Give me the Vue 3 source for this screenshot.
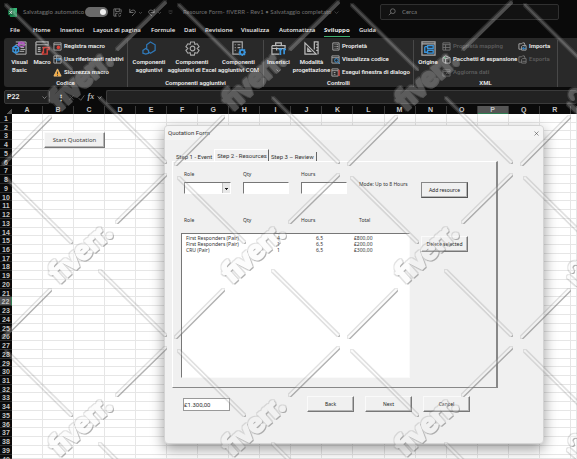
<script setup>
import { ref } from 'vue'

const autosave = ref(true)
const activeTab = ref('Sviluppo')
const tabs = ['File', 'Home', 'Inserisci', 'Layout di pagina', 'Formule', 'Dati', 'Revisione', 'Visualizza', 'Automatizza', 'Sviluppo', 'Guida']
const columns = 'ABCDEFGHIJKLMNOPQRS'.split('')
const rows = Array.from({ length: 40 }, (_, i) => i + 1)
const steps = ['Step 1 - Event', 'Step 2 - Resources', 'Step 3 – Review']
const activeStep = ref(1)
const resources = [
  { role: 'First Responders (Pair)', qty: 4, hours: '6,5', total: '£800,00' },
  { role: 'First Responders (Pair)', qty: 1, hours: '6,5', total: '£200,00' },
  { role: 'CRU (Pair)', qty: 1, hours: '6,5', total: '£300,00' }
]
const total = ref('£1.300,00')
const tile = 173
const marks = []
for (let r = 0; r < 3; r++) {
  for (let c = 0; c < 4; c++) marks.push({ x: c * tile, y: r * tile, text: c < 3 })
}
</script>

<template>
  <div class="app">
    <header class="titlebar">
      <svg class="logo" viewBox="0 0 10 10"><rect x="2" y="0" width="8" height="10" rx="1" fill="#1c8a52" /><rect x="6" y="0" width="4" height="5" fill="#35b777" /><rect x="0" y="2" width="6" height="6" rx="1" fill="#0f6b3c" /><path d="M1.700 3.500l2.600 3M4.300 3.500l-2.600 3" stroke="#fff" stroke-width="1" /></svg>
      <label class="autosave"><span>Salvataggio automatico</span><input v-model="autosave" type="checkbox" class="toggle" /></label>
      <div class="quick">
        <button aria-label="Salva"><svg viewBox="0 0 10 10"><path d="M1 1h7l1 1v3M1 1v8h3M3 1v3h4V1M3 9V6h2" /><path d="M6 7a2 2 0 0 1 3-.5M9 8a2 2 0 0 1-3 .7" /></svg></button>
        <button aria-label="Annulla"><svg viewBox="0 0 10 10"><path d="M2 1v4h4M2 5c2-4 7-3 6 0-.5 1.500-2 2-3.500 4" /></svg></button>
        <button class="tiny" aria-label="Elenco annulla"><svg viewBox="0 0 10 10"><path d="M2 4l3 3 3-3" /></svg></button>
        <button aria-label="Ripeti"><svg viewBox="0 0 10 10"><path d="M8 1v4H4M8 5C6 1 1 2 2 5c.5 1.500 2 2 3.500 4" /></svg></button>
        <button class="tiny" aria-label="Elenco ripeti"><svg viewBox="0 0 10 10"><path d="M2 4l3 3 3-3" /></svg></button>
        <button class="tiny" aria-label="Personalizza"><svg viewBox="0 0 10 10"><path d="M1 2h8M2 5l3 3 3-3" /></svg></button>
      </div>
      <div class="doc"><span>Resource Form- fIVERR - Rev1 • Salvataggio completato</span><svg viewBox="0 0 10 10"><path d="M1 3l4 4 4-4" /></svg></div>
      <label class="search"><svg viewBox="0 0 10 10"><circle cx="6" cy="4" r="3" /><path d="M4 6L1 9" /></svg><input type="text" placeholder="Cerca" aria-label="Cerca" /></label>
    </header>

    <nav class="tabs">
      <button v-for="t in tabs" :key="t" :class="{ on: t === activeTab }" @click="activeTab = t">{{ t }}</button>
    </nav>

    <section class="ribbon">
      <div class="group code">
        <div class="tools">
          <button class="big"><svg viewBox="0 0 16 16"><path d="M4 1h11v13H4M4 4h11M9 7h4M9 9h5M8 11h5" stroke="#bbb" /><path d="M1 7l3-2 3 2v4l-3 2-3-2zM1 7l3 2 3-2M4 9v4" stroke="#3b95dc" stroke-width="1.500" /><path d="M7 2l3-1 3 1v3l-3 1-3-1zM7 2l3 1 3-1" stroke="#b35cc4" stroke-width="1.300" /></svg><span>Visual<br />Basic</span></button>
          <button class="big"><svg viewBox="0 0 16 16"><path d="M1 1h13v4M1 1v13h7M1 4h13M3 7h3M8 7h3M3 9h3M3 11h3" stroke="#aaa" stroke-width="1.300" /><path d="M9 7h6v2h-2v5H8v-2h1z" stroke="#d8443c" stroke-width="1.500" /></svg><span>Macro</span></button>
          <div class="stack">
            <button><svg viewBox="0 0 10 10"><path d="M1 1h8v8H1zM1 3h8" stroke="#aaa" /><circle cx="6" cy="6" r="2" fill="#d8443c" /></svg>Registra macro</button>
            <button><svg viewBox="0 0 10 10"><path d="M1 1h8v8H1zM1 4h8M4 1v8" stroke="#aaa" /><path d="M3 5l2-2v4zM9 5L6 3v4z" fill="#3b95dc" /></svg>Usa riferimenti relativi</button>
            <button><svg viewBox="0 0 10 10"><path d="M5 1l4 8H1z" fill="#f2a73b" stroke="#f2c27a" /><path d="M5 4v3M5 8v1" stroke="#333" /></svg>Sicurezza macro</button>
          </div>
        </div>
        <p>Codice</p>
      </div>
      <div class="group addins">
        <div class="tools">
          <button class="big"><svg viewBox="0 0 16 16"><path d="M9 1l5 3v6l-5 3-4-3V4z" stroke="#2f78b8" stroke-width="1.300" /><path d="M4 8l3 2v3l-3 1-3-1v-3z" fill="#2a2a2a" stroke="#2f78b8" stroke-width="1.300" /></svg><span>Componenti<br />aggiuntivi</span></button>
          <button class="big"><svg viewBox="0 0 16 16"><path d="M6 1h4l.5 2.500L13 3l2 3-2 2 2 2-2 3-2.500-.5L10 15H6l-.5-2.500L3 13l-2-3 2-2-2-2 2-3 2.500.5z" stroke="#aaa" stroke-width="1.200" /><circle cx="8" cy="8" r="2.500" stroke="#aaa" stroke-width="1.200" /></svg><span>Componenti<br />aggiuntivi di Excel</span></button>
          <button class="big"><svg viewBox="0 0 16 16"><path d="M9 14H2V1h10v7M4 4h1M4 7h1M4 10h1M7 4h3M7 7h3" stroke="#aaa" stroke-width="1.300" /><circle cx="12" cy="12" r="2.500" stroke="#3b95dc" stroke-width="2" /><path d="M12 8v2M12 14v2M8 12h2M14 12h2M9 9l1 1M14 14l1 1M15 9l-1 1M9 15l1-1" stroke="#3b95dc" stroke-width="1.300" /></svg><span>Componenti<br />aggiuntivi COM</span></button>
        </div>
        <p>Componenti aggiuntivi</p>
      </div>
      <div class="group controls">
        <div class="tools">
          <button class="big"><svg viewBox="0 0 16 16"><path d="M1 5h14v3M1 5v9h8M5 5V2h6v3M1 8h14M6 7v3" stroke="#bbb" stroke-width="1.300" /><path d="M8 9h4M10 9v6M13 9h3M14 9v5" stroke="#3b95dc" stroke-width="1.800" /></svg><span>Inserisci</span><svg class="down" viewBox="0 0 10 10"><path d="M1 3l4 4 4-4" /></svg></button>
          <button class="big"><svg viewBox="0 0 16 16"><path d="M1 2l12 12H1zM4 8l3 3H4zM11 9V1h4v13M13 4h2M13 7h2M13 10h2" stroke="#bbb" stroke-width="1.300" /></svg><span>Modalità<br />progettazione</span></button>
          <div class="stack">
            <button><svg viewBox="0 0 10 10"><path d="M2 1h7v8H2zM4 3h1M4 5h1M4 7h1M6 3h2M6 5h2M6 7h2" stroke="#aaa" /></svg>Proprietà</button>
            <button><svg viewBox="0 0 10 10"><path d="M1 1h8v8H1zM1 3h8" stroke="#aaa" /><circle cx="6" cy="6" r="2" stroke="#3b95dc" /><path d="M8 8l2 2" stroke="#3b95dc" /></svg>Visualizza codice</button>
            <button><svg viewBox="0 0 10 10"><path d="M1 1h7v8H1zM1 3h7M3 5h2M3 7h2" stroke="#aaa" /><path d="M9 2v7" stroke="#d8443c" stroke-width="1.500" /></svg>Esegui finestra di dialogo</button>
          </div>
        </div>
        <p>Controlli</p>
      </div>
      <div class="group xml">
        <div class="tools">
          <button class="big"><svg viewBox="0 0 16 16"><path d="M1 1h14v14H1zM1 3h14" stroke="#aaa" stroke-width="1.300" /><path d="M4 6h3M4 6v6h3M7 5h6v3H7zM7 10h6v3H7z" stroke="#3b95dc" stroke-width="1.400" /></svg><span>Origine</span></button>
          <div class="stack">
            <button disabled><svg viewBox="0 0 10 10"><path d="M1 1h8v8H1zM1 3h8M1 6h8M4 3v6" stroke="#777" /></svg>Proprietà mapping</button>
            <button><svg viewBox="0 0 10 10"><path d="M1 3l3-2 5 2v6H3L1 7zM1 3l3 1 5-1M4 4v5" stroke="#bbb" /><circle cx="3" cy="3" r="1" fill="#4ba46c" /></svg>Pacchetti di espansione</button>
            <button disabled><svg viewBox="0 0 10 10"><path d="M1 2h8v7H1zM1 4h8M4 7l2-2 2 2" stroke="#666" /></svg>Aggiorna dati</button>
          </div>
          <div class="stack">
            <button><svg viewBox="0 0 10 10"><path d="M1 2h3l1-1h2l1 3M1 2v6h3M5 4h4v5H4V5z" stroke="#aaa" /><path d="M9 7H5M7 5L5 7l2 2" stroke="#3b95dc" /></svg>Importa</button>
            <button disabled><svg viewBox="0 0 10 10"><path d="M1 2h3l1-1h2l1 3M1 2v6h3M5 4h4v5H4V5zM5 7h4" stroke="#777" /></svg>Esporta</button>
          </div>
        </div>
        <p>XML</p>
      </div>
    </section>

    <section class="formula">
      <div class="name"><input type="text" value="P22" aria-label="Casella nome" /><svg viewBox="0 0 10 10"><path d="M1 3l4 4 4-4" /></svg></div>
      <div class="fx"><span>⋮</span><svg viewBox="0 0 10 10"><path d="M2 2l6 6M8 2L2 8" stroke="#555" /></svg><svg viewBox="0 0 10 10"><path d="M1 6l3 3 5-7" stroke="#777" /></svg><i>fx</i><svg class="caret" viewBox="0 0 10 10"><path d="M1 3l4 4 4-4" /></svg></div>
      <input class="entry" type="text" aria-label="Barra della formula" />
    </section>

    <main class="sheet">
      <div class="heads">
        <span class="corner"></span>
        <span v-for="c in columns" :key="c" :class="{ sel: c === 'P' }">{{ c === 'S' ? '' : c }}</span>
      </div>
      <div class="body">
        <div class="nums"><span v-for="r in rows" :key="r" :class="{ sel: r === 22 }">{{ r }}</span></div>
        <div class="cells">
          <div class="hlines"><i v-for="r in rows" :key="r"></i></div>
          <div class="vlines"><i v-for="c in columns" :key="c"></i></div>
          <button class="btn start">Start Quotation</button>
        </div>
      </div>
    </main>

    <section class="dialog" role="dialog" aria-labelledby="dlg-title">
      <header><span id="dlg-title">Quotation Form</span><button aria-label="Chiudi"><svg viewBox="0 0 10 10"><path d="M1 1l8 8M9 1L1 9" /></svg></button></header>
      <div class="steps" role="tablist">
        <button v-for="(s, i) in steps" :key="s" role="tab" :class="{ on: i === activeStep }" @click="activeStep = i">{{ s }}</button>
      </div>
      <div class="panel">
        <div class="fields">
          <div><label for="role">Role</label><select id="role"><option></option></select></div>
          <div><label for="qty">Qty</label><input id="qty" type="text" /></div>
          <div><label for="hours">Hours</label><input id="hours" type="text" /></div>
          <p>Mode: Up to 8 Hours</p>
          <button class="btn primary">Add resource</button>
        </div>
        <div class="list">
          <table>
            <thead><tr><th>Role</th><th>Qty</th><th>Hours</th><th>Total</th></tr></thead>
            <tbody>
              <tr v-for="(r, i) in resources" :key="i"><td>{{ r.role }}</td><td>{{ r.qty }}</td><td>{{ r.hours }}</td><td>{{ r.total }}</td></tr>
            </tbody>
          </table>
          <button class="btn">Delete selected</button>
        </div>
      </div>
      <footer>
        <input v-model="total" type="text" aria-label="Total" />
        <div class="actions">
          <button class="btn">Back</button>
          <button class="btn">Next</button>
          <button class="btn">Cancel</button>
        </div>
      </footer>
    </section>

    <svg class="marks">
      <defs>
        <filter id="emboss" x="0" y="0" width="100%" height="100%" color-interpolation-filters="sRGB">
          <feOffset in="SourceAlpha" dx="1" dy="1" result="o" />
          <feGaussianBlur in="o" stdDeviation="0.5" result="b" />
          <feComposite in="b" in2="SourceAlpha" operator="out" result="rim" />
          <feFlood flood-color="#777" flood-opacity="0.45" />
          <feComposite in2="rim" operator="in" result="shade" />
          <feMorphology in="SourceAlpha" operator="dilate" radius="1" result="wide" />
          <feComposite in="wide" in2="SourceAlpha" operator="out" result="edge" />
          <feFlood flood-color="#888" flood-opacity="0.25" />
          <feComposite in2="edge" operator="in" result="line" />
          <feComponentTransfer in="SourceGraphic" result="face"><feFuncA type="linear" slope="0.28" /></feComponentTransfer>
          <feMerge><feMergeNode in="line" /><feMergeNode in="shade" /><feMergeNode in="face" /></feMerge>
        </filter>
      </defs>
      <g filter="url(#emboss)">
        <rect width="100%" height="100%" fill="none" stroke="none" />
        <g v-for="(m, i) in marks" :key="i" :transform="`translate(${m.x} ${m.y})`">
          <path d="M6 5L71 69M165 2L117 49M100 98L165 162M3 164L50 117" />
          <text v-if="m.text" transform="translate(59 111) rotate(-42)">fiverr.</text>
          <path v-else class="edge" d="M50 104l8 7M53 98c-4-4 0-9 5-8" />
        </g>
      </g>
    </svg>
  </div>
</template>

<style>
body { margin: 0; overflow: hidden; background: #0a0a0a; }
</style>

<style scoped>
* { box-sizing: border-box; }
.app { position: relative; display: flex; flex-direction: column; height: 100vh; overflow: hidden; background: #0a0a0a; color: #eee; font: 600 6px/8px "Open Sans", "Noto Sans", sans-serif; white-space: nowrap; }
button, input, select { font: inherit; color: inherit; border: 0; padding: 0; margin: 0; background: none; min-width: 0; outline: 0; }
p { margin: 0; }
svg { fill: none; stroke: #aaa; flex: none; }
svg [fill]:not([stroke]) { stroke: none; }

.titlebar { display: grid; grid-template-columns: 15px 85px 75px 1fr 179px; align-items: center; height: 24px; flex: none; padding: 0 18px 0 8px; color: #707070; font-family: Lato, sans-serif; font-weight: 500; }
.logo { width: 9px; height: 9px; }
.autosave { display: flex; align-items: center; justify-content: space-between; }
.toggle { appearance: none; display: flex; align-items: center; justify-content: flex-end; flex: none; width: 23px; height: 10px; padding: 0 2px; border-radius: 5px; background: #6a6a6a; }
.toggle::after { content: ""; width: 6px; height: 6px; border-radius: 50%; background: #eee; }
.quick { display: grid; grid-template-columns: 15px 10px 9px 10px 11px 5px; align-items: center; padding-left: 5px; }
.quick button { display: flex; }
.quick svg { width: 9px; height: 9px; stroke: #777; }
.quick .tiny svg { width: 5px; height: 5px; }
.doc { display: flex; align-items: center; gap: 3px; color: #6a6a6a; }
.doc svg { width: 5px; height: 5px; stroke: #666; }
.search { display: flex; align-items: center; gap: 6px; height: 16px; padding-left: 7px; border: 1px solid #303030; border-radius: 2px; background: #121212; }
.search svg { width: 8px; height: 8px; stroke: #777; }
.search input { flex: 1; }
.search input::placeholder { color: #777; }

.tabs { display: grid; grid-template-columns: 23px 27px 33px 58px 33px 21px 36px 38px 45px 35px 1fr; height: 14px; flex: none; padding-left: 10px; justify-items: start; }
.tabs button { height: 13px; border-bottom: 1px solid transparent; font-weight: 600; }
.tabs .on { border-color: #3fae6f; font-weight: 700; }

.ribbon { display: grid; grid-template-columns: 124fr 136fr 150fr 144fr 19fr; height: 49px; flex: none; margin-left: 4px; border-radius: 3px 0 0 3px; background: #292929; font-family: Roboto, sans-serif; }
.group { display: flex; flex-direction: column; justify-content: space-between; min-width: 0; margin: 2px 0 1px; border-right: 1px solid #484848; text-align: center; }
.tools { display: grid; align-items: start; }
.code .tools { grid-template-columns: 23px 22px 1fr; padding-left: 4px; }
.addins .tools { grid-template-columns: 36px 50px 1fr; padding: 0 3px; }
.controls .tools { grid-template-columns: 29px 37px 1fr; }
.controls .stack { padding-left: 1px; }
.xml .tools { grid-template-columns: 28px 76px 1fr; }
.big { display: flex; flex-direction: column; align-items: center; gap: 2px; padding-top: 1px; line-height: 8px; }
.big svg { width: 15px; height: 15px; }
.big .down { width: 5px; height: 5px; stroke: #ddd; }
.stack { display: grid; grid-auto-rows: 13px; }
.stack button { display: flex; align-items: center; gap: 2px; height: 12px; }
.stack svg { width: 9px; height: 9px; }
.stack button:disabled { color: #5c5c5c; }

.formula { display: grid; grid-template-columns: 46px 54px 1fr; column-gap: 1px; height: 19px; flex: none; padding: 3px 0 2px 4px; }
.name, .entry { border: 1px solid #3a3a3a; border-radius: 2px; background: #222; }
.name { display: flex; align-items: center; padding: 0 2px; }
.name input { flex: 1; font-family: Roboto, sans-serif; font-size: 7px; }
.name svg, .caret { width: 5px; height: 5px; stroke: #ccc; }
.fx { display: flex; align-items: center; justify-content: space-between; padding: 0 3px 0 6px; font-size: 8px; }
.fx svg { width: 7px; height: 7px; }
.fx .caret { width: 5px; }
.fx i { font-family: "Liberation Serif", serif; color: #bbb; }
.entry { width: 100%; border-right: 0; }

.sheet { flex: 1; min-height: 0; display: flex; flex-direction: column; }
.heads { display: grid; grid-template-columns: 12px repeat(18, 5fr) 1fr; height: 8px; flex: none; line-height: 8px; text-align: center; font-family: "Liberation Sans", sans-serif; font-size: 7px; color: #c4c4c4; }
.heads span { border-right: 1px solid #3a3a3a; min-width: 0; }
.heads .corner { border: 0; background: linear-gradient(135deg, transparent 70%, #555 70%); }
.heads .sel { background: #555; box-shadow: inset 0 -1px #2f7d51; }
.body { flex: 1; min-height: 0; display: grid; grid-template-columns: 12px 1fr; }
.nums, .hlines { display: grid; grid-template-rows: repeat(39, 2fr) 1fr; min-height: 0; }
.nums span { min-height: 0; border-bottom: 1px solid #2c2c2c; font: 700 7px/9px "Liberation Sans", sans-serif; text-align: center; color: #c4c4c4; }
.nums .sel { background: #555; border-right: 1px solid #2f7d51; }
.cells { position: relative; display: grid; background: #fff; min-height: 0; }
.hlines, .vlines { grid-area: 1 / 1; }
.hlines i { min-height: 0; border-bottom: 1px solid #e6e6e6; }
.vlines { display: grid; grid-template-columns: repeat(18, 5fr) 1fr; }
.vlines i { border-right: 1px solid #e6e6e6; }

.btn { height: 16px; border: 1px solid; border-color: #fafafa #777 #777 #fafafa; box-shadow: inset -1px -1px #b5b5b5; background: #f0f0f0; color: #222; font-weight: 400; text-align: center; }
.start { position: absolute; left: 32px; top: 18px; width: 61px; color: #444; font-family: "Noto Sans", sans-serif; font-size: 6px; }

.dialog { position: absolute; left: 164px; top: 125px; width: 380px; padding-bottom: 31px; border: 1px solid #d4d4d4; border-radius: 4px; background: #f0f0f0; color: #333; font-family: "Noto Sans", sans-serif; font-size: 5px; font-weight: 400; box-shadow: 0 5px 14px rgba(0, 0, 0, .4); }
.dialog header { display: flex; align-items: center; justify-content: space-between; height: 14px; padding: 0 4px 0 3px; background: #f4f4f4; border-radius: 4px 4px 0 0; font-family: Roboto, sans-serif; font-size: 6px; }
.dialog header button { display: flex; }
.dialog header svg { width: 5px; height: 5px; stroke: #333; }
.steps { display: flex; align-items: flex-end; height: 21px; padding-left: 7px; font-family: Roboto, sans-serif; font-size: 6px; }
.steps button { height: 9px; padding: 0 2px 0 4px; }
.steps .on { height: 12px; padding: 0 1px 0 2px; border-top: 1px solid #fff; border-left: 1px solid #fff; border-right: 1px solid #666; }
.steps .on + button { padding-left: 2px; }
.steps button:last-child { border-right: 1px solid #666; }
.panel { margin: 0 45px 0 7px; padding: 8px 28px 9px 8px; border: 1px solid; border-color: #fff #888 #888 #fff; border-right-width: 2px; }
.fields { display: grid; grid-template-columns: 47px 46px 46px 1fr 47px; column-gap: 12px; padding-left: 3px; align-items: end; }
.fields label { display: block; margin-bottom: 4px; }
.fields input, .fields select { display: block; width: 100%; height: 12px; border: 1px solid; border-color: #777 #fff #fff #777; background: #fff; }
.fields select { appearance: none; background: linear-gradient(#222, #222) no-repeat right 2px top 5px / 3px 1px, linear-gradient(#222, #222) no-repeat right 3px top 6px / 1px 1px, linear-gradient(90deg, #fff 37px, #999 37px, #e8e8e8 38px); }
.fields p { align-self: center; padding-top: 4px; }
.fields .btn { margin-bottom: -4px; }
.fields .primary { border-color: #888 #555 #555 #888; }
.list { display: grid; grid-template-columns: 229px 47px; justify-content: space-between; align-items: start; margin-top: 22px; }
table { display: block; }
thead, tbody { display: block; }
tr { display: grid; grid-template-columns: 91px 39px 38px 1fr; padding-left: 4px; }
th, td { padding: 0; font-weight: 400; text-align: left; }
thead tr { grid-template-columns: 59px 58px 58px 1fr; padding-left: 3px; margin-bottom: 9px; }
tbody { min-height: 145px; padding-top: 1px; border: 1px solid; border-color: #777 #fafafa #fafafa #777; background: #fff; }
tbody tr { line-height: 6px; }
.list .btn { margin-top: 20px; }
footer { display: flex; align-items: center; gap: 77px; padding: 8px 0 0 18px; }
footer input { width: 47px; height: 13px; border: 1px solid #999; background: #fff; font-family: Roboto, sans-serif; font-size: 6px; }
.actions { display: grid; grid-template-columns: 47px 47px 47px; column-gap: 11px; }

.marks { position: absolute; inset: 0; width: 100%; height: 100%; pointer-events: none; }
.marks path { stroke: #f4f4f4; stroke-width: 2; stroke-linecap: round; }
.marks .edge { stroke-width: 4; }
.marks text { fill: #f4f4f4; stroke: #f4f4f4; stroke-width: 2; font: 900 28px Lato, sans-serif; }
</style>
